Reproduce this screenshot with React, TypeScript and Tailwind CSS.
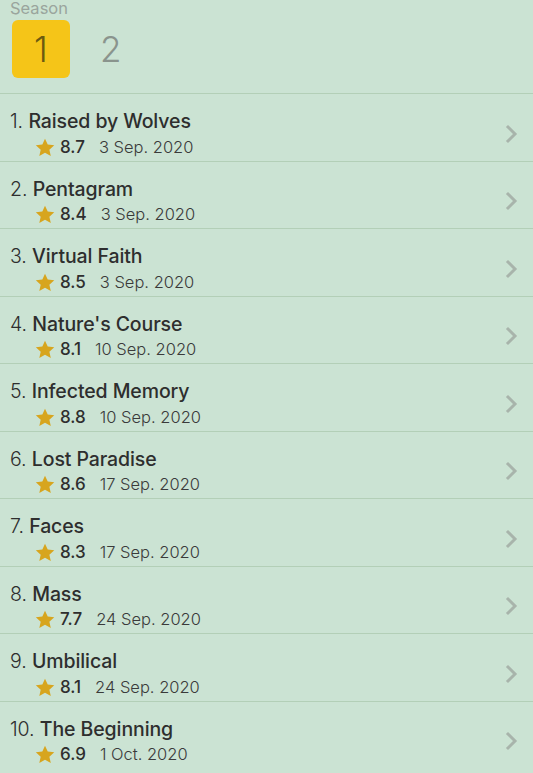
import React from "react";

const episodes = [
  { t: "Raised by Wolves", r: "8.7", d: "3 Sep. 2020" },
  { t: "Pentagram", r: "8.4", d: "3 Sep. 2020" },
  { t: "Virtual Faith", r: "8.5", d: "3 Sep. 2020" },
  { t: "Nature's Course", r: "8.1", d: "10 Sep. 2020" },
  { t: "Infected Memory", r: "8.8", d: "10 Sep. 2020" },
  { t: "Lost Paradise", r: "8.6", d: "17 Sep. 2020" },
  { t: "Faces", r: "8.3", d: "17 Sep. 2020" },
  { t: "Mass", r: "7.7", d: "24 Sep. 2020" },
  { t: "Umbilical", r: "8.1", d: "24 Sep. 2020" },
  { t: "The Beginning", r: "6.9", d: "1 Oct. 2020" },
];

function Star() {
  return (
    <svg width="20" height="19" viewBox="0 0 24 23" className="shrink-0">
      <path
        d="M12 0.8l3.3 7.2 7.9.8-5.9 5.3 1.7 7.8L12 17.9l-6.9 4 1.7-7.8L.9 8.8l7.9-.8z"
        fill="#d7a51e"
      />
    </svg>
  );
}

function Chevron() {
  return (
    <svg width="14" height="20" viewBox="0 0 14 20">
      <path d="M3 3l7 7-7 7" fill="none" stroke="#a8b4ab" strokeWidth="3" strokeLinecap="square" />
    </svg>
  );
}

export default function App() {
  return (
    <div
      className="w-[533px] h-[773px] overflow-hidden bg-[#cbe3d3]"
      style={{ fontFamily: "Inter, 'Noto Sans', sans-serif" }}
    >
      <div className="h-[93px] pl-[12px] relative">
        <div className="absolute left-[10px] top-0 text-[16.5px] text-[#9aa59d] leading-[17px]">Season</div>
        <div className="flex items-center pt-[20px] gap-[30px]">
          <div className="w-[58px] h-[58px] rounded-[6px] bg-[#f5c518] flex items-center justify-center text-[35px] font-light text-[#6b5a10]">
            1
          </div>
          <div className="text-[35px] font-light text-[#8a948d]">2</div>
        </div>
      </div>
      {episodes.map((e, i) => (
        <div key={i} className="h-[67.5px] border-t-[1.5px] border-[#b3cfb7] flex items-center pr-[14px] pt-[13px]">
          <div className="flex-1 pl-[10px]">
            <div className="text-[19.5px] leading-[24px] text-[#2e2e2e] tracking-[-0.1px]">
              <span className="font-light">{i + 1}.</span>{" "}
              <span className="font-medium">{e.t}</span>
            </div>
            <div className="flex items-center pl-[25px] mt-[3px] h-[22px]">
              <Star />
              <span className="ml-[5px] text-[17px] font-medium text-[#2e2e2e]">{e.r}</span>
              <span className="ml-[14px] text-[16.5px] font-light text-[#3a3a3a]">{e.d}</span>
            </div>
          </div>
          <Chevron />
        </div>
      ))}
    </div>
  );
}
